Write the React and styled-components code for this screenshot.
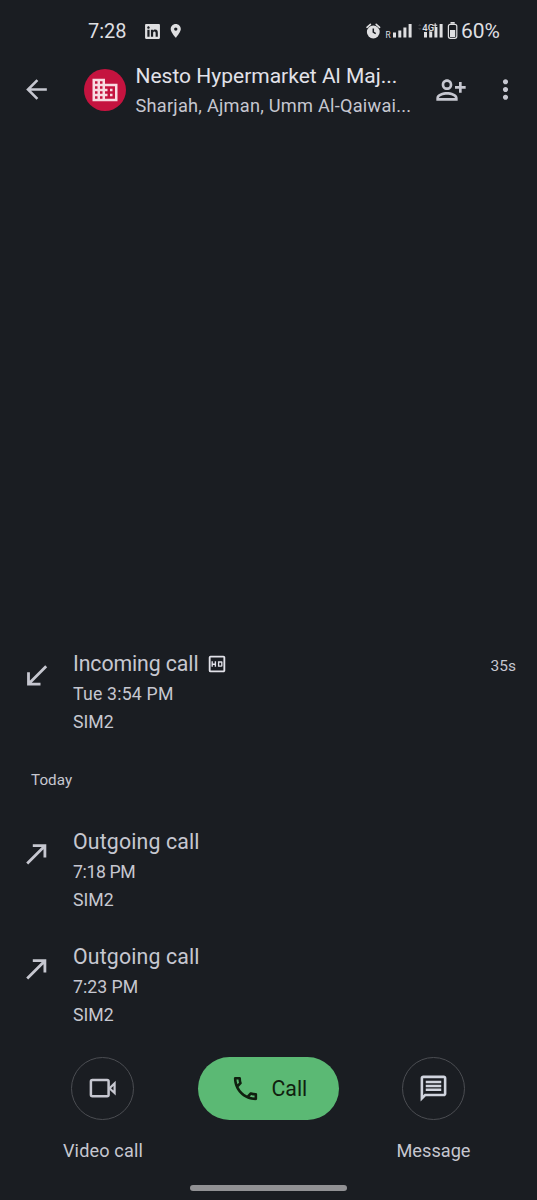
import React from 'react';
import styled, { createGlobalStyle } from 'styled-components';
import { FaLinkedin, FaLocationDot } from 'react-icons/fa6';
import {
  MdArrowBack,
  MdBusiness,
  MdMoreVert,
  MdOutlineHd,
  MdOutlineMessage,
  MdOutlinePhone,
} from 'react-icons/md';

const GlobalStyle = createGlobalStyle`
  * {
    box-sizing: border-box;
  }

  body {
    margin: 0;
    background: #1a1d22;
    color: #c6c7d0;
    font-family: 'Roboto', 'Liberation Sans', sans-serif;
  }

  svg {
    display: block;
    flex-shrink: 0;
  }
`;

const Screen = styled.div`
  width: 537px;
  height: 1200px;
  display: flex;
  flex-direction: column;
  overflow: hidden;
  background: #1a1d22;
`;

const Label = styled.span`
  display: block;
  flex-shrink: 0;
  white-space: nowrap;
  font-size: ${props => props.$size}px;
  line-height: ${props => props.$line || 28}px;
  letter-spacing: ${props => props.$track || 0}px;
  color: ${props => props.$color || '#c6c7d0'};
`;

const StatusBar = styled.header`
  height: 62px;
  padding: 0 37px 0 88px;
  display: flex;
  align-items: center;
  color: #dfdfe1;
`;

const StatusIcons = styled.div`
  display: flex;
  align-items: center;
  gap: 8px;
  margin-left: 17px;
`;

const StatusRight = styled.div`
  display: flex;
  align-items: center;
  margin-left: auto;
`;

const TopBar = styled.div`
  height: 55px;
  display: flex;
  align-items: center;
  padding-left: 21px;
`;

const Avatar = styled.div`
  width: 42px;
  height: 42px;
  margin: 0 10px 0 31.5px;
  border-radius: 50%;
  background: #c5133f;
  color: #f8dbe2;
  display: flex;
  align-items: center;
  justify-content: center;
  flex-shrink: 0;
`;

const Contact = styled.div`
  width: 299px;
  display: flex;
  flex-direction: column;
  padding-top: 3px;
`;

const TopActions = styled.div`
  display: flex;
  align-items: center;
  gap: 23.5px;
  color: #c6c7d0;
`;

const History = styled.main`
  flex: 1;
  display: flex;
  flex-direction: column;
  justify-content: flex-end;
`;

const CallRow = styled.section`
  height: ${props => props.$height || 115}px;
  display: flex;
  align-items: flex-start;
  padding: 0 21px 0 21px;
`;

const Direction = styled.div`
  width: 52px;
  padding-top: ${props => (props.$type === 'in' ? 12 : 13)}px;
`;

const Details = styled.div`
  flex: 1;
`;

const Title = styled.div`
  display: flex;
  align-items: center;
  gap: 7px;
  height: 32px;
`;

const DayLabel = styled.div`
  height: 60px;
  padding-left: 31px;
`;

const Actions = styled.footer`
  height: 116px;
  padding-top: 1px;
  display: grid;
  grid-template-columns: 206px minmax(0, 1fr) 207px;
  justify-items: center;
`;

const Action = styled.button`
  border: 0;
  padding: 0;
  background: none;
  display: flex;
  flex-direction: column;
  align-items: center;
  gap: 17px;
  height: 108px;
  font: inherit;
  color: #d0d4de;
`;

const Round = styled.span`
  width: 63px;
  height: 63px;
  border: 1.5px solid #4b4d52;
  border-radius: 50%;
  display: flex;
  align-items: center;
  justify-content: center;
  flex-shrink: 0;
`;

const CallButton = styled.button`
  width: 141px;
  height: 63px;
  border: 0;
  border-radius: 32px;
  padding: 0 0 0 32px;
  background: #5bb974;
  color: #10200f;
  display: flex;
  align-items: center;
  gap: 11px;
  font: inherit;
`;

const NavBar = styled.div`
  height: 28px;
  display: flex;
  justify-content: center;
  padding-top: 13px;
`;

const Handle = styled.div`
  width: 157px;
  height: 6px;
  border-radius: 3px;
  background: #919194;
`;

const calls = [
  { type: 'in', title: 'Incoming call', titleTrack: -0.1, time: 'Tue 3:54 PM', timeTrack: 0.2, sim: 'SIM2', length: '35s', hd: true },
  { type: 'out', title: 'Outgoing call', titleTrack: 0.15, time: '7:18 PM', timeTrack: -0.4, sim: 'SIM2' },
  { type: 'out', title: 'Outgoing call', titleTrack: 0.15, time: '7:23 PM', timeTrack: 0, sim: 'SIM2' },
];

const StatusGlyphs = () => (
  <svg width="95" height="20" viewBox="366 21 95 20" fill="#dfdfe1">
    <circle cx="373.3" cy="32" r="6.4" />
    <path d="M367 27.3l3.4-3M379.6 27.3l-3.4-3" stroke="#dfdfe1" strokeWidth="1.6" strokeLinecap="round" />
    <path d="M373.3 28.5v3.6l2.4 1.6" fill="none" stroke="#1a1d22" strokeWidth="1.5" />
    <text x="385.4" y="37.5" fontSize="8.3" fontFamily="Roboto, sans-serif">R</text>
    <path d="M393 32.5h3v5h-3zM398.3 30.5h3v7h-3zM403.4 27.5h3v10h-3zM408.6 24h3v13.5h-3z" />
    <path d="M418 26l1.8-2.2 1.8 2.2zM418 28l1.8 2.2 1.8-2.2z" fill="#3a3c40" />
    <path d="M424 32h3v5.5h-3zM429.2 31h3v6.5h-3zM434.4 27h3v10.5h-3zM439.6 24h3v13.5h-3z" />
    <text x="422.3" y="30.5" fontSize="9.5" fontWeight="500" fontFamily="Roboto, sans-serif" stroke="#1a1d22" strokeWidth="1.2" paintOrder="stroke">4G</text>
    <path d="M435.2 23.2v4M433.2 25.2h4" stroke="#dfdfe1" strokeWidth="1.1" />
    <rect x="448.4" y="24.3" width="8.4" height="14" rx="2" fill="none" stroke="#dfdfe1" strokeWidth="1.2" />
    <path d="M450.5 22h4.2v1.7h-4.2zM450 30h5.2v7h-5.2z" />
  </svg>
);

const Arrow = ({ type }) => (
  <svg width="31" height="31" viewBox="0 0 31 31" fill="none" stroke="#c6c7d0" strokeWidth="2.8">
    {type === 'in' ? (
      <path d="M25.2 6.2L7.5 23.9M7.5 12.3v11.9h12" />
    ) : (
      <path d="M6.2 24.6L24 6.8M11.8 6.6h12.1v12" />
    )}
  </svg>
);

const PersonAdd = () => (
  <svg width="32" height="32" viewBox="0 0 24 24" fill="currentColor">
    <path d="M9 12c2.2 0 4-1.8 4-4s-1.8-4-4-4-4 1.8-4 4 1.8 4 4 4zm0-6a2 2 0 1 1 0 4 2 2 0 0 1 0-4zM9 13.5c-3 0-8 1.3-8 4.5v2h16v-2c0-3.2-5-4.500-8-4.500zm6 4.500H3c0-1.300 3.300-2.500 6-2.500s6 1.200 6 2.500zM20 9V6h-2v3h-3v2h3v3h2v-3h3V9z" />
  </svg>
);

const VideoIcon = () => (
  <svg width="31" height="31" viewBox="0 0 31 31" fill="none" stroke="#c6c7d0" strokeWidth="2.5">
    <rect x="3.9" y="7.1" width="17.7" height="16.2" rx="1.5" />
    <path d="M22.5 15.2l5.1-4.8v9.600z" strokeWidth="2.200" />
  </svg>
);

const CallEntry = ({ call, height }) => (
  <CallRow $height={height}>
    <Direction $type={call.type}>
      <Arrow type={call.type} />
    </Direction>
    <Details>
      <Title>
        <Label $size={21.3} $track={call.titleTrack}>{call.title}</Label>
        {call.hd && <MdOutlineHd size={22} color="#e2e2e9" />}
      </Title>
      <Label $size={17.7} $track={call.timeTrack}>{call.time}</Label>
      <Label $size={17.7}>{call.sim}</Label>
    </Details>
    {call.length && <Label $size={15.5} $line={36}>{call.length}</Label>}
  </CallRow>
);

const App = () => (
  <>
    <GlobalStyle />
    <Screen>
      <StatusBar>
        <Label $size={20} $color="#dfdfe1" $line={30}>7:28</Label>
        <StatusIcons>
          <FaLinkedin size={17} />
          <FaLocationDot size={13.5} />
        </StatusIcons>
        <StatusRight>
          <StatusGlyphs />
          <Label $size={21} $color="#dfdfe1">60%</Label>
        </StatusRight>
      </StatusBar>
      <TopBar>
        <MdArrowBack size={31} />
        <Avatar>
          <MdBusiness size={30} />
        </Avatar>
        <Contact>
          <Label $size={21} $color="#e2e2e9" $line={29}>Nesto Hypermarket Al Maj...</Label>
          <Label $size={18.2} $track={0.24} $line={30}>Sharjah, Ajman, Umm Al-Qaiwai...</Label>
        </Contact>
        <TopActions>
          <PersonAdd />
          <MdMoreVert size={31} />
        </TopActions>
      </TopBar>
      <History>
        <CallEntry call={calls[0]} height={118} />
        <DayLabel>
          <Label $size={15.2} $track={0.05}>Today</Label>
        </DayLabel>
        <CallEntry call={calls[1]} />
        <CallEntry call={calls[2]} />
      </History>
      <Actions>
        <Action>
          <Round>
            <VideoIcon />
          </Round>
          <Label $size={18.1} $track={0.15}>Video call</Label>
        </Action>
        <CallButton>
          <MdOutlinePhone size={31} />
          <Label $size={21.3} $color="#10200f">Call</Label>
        </CallButton>
        <Action>
          <Round>
            <MdOutlineMessage size={31} />
          </Round>
          <Label $size={18.2}>Message</Label>
        </Action>
      </Actions>
      <NavBar>
        <Handle />
      </NavBar>
    </Screen>
  </>
);

export default App;
